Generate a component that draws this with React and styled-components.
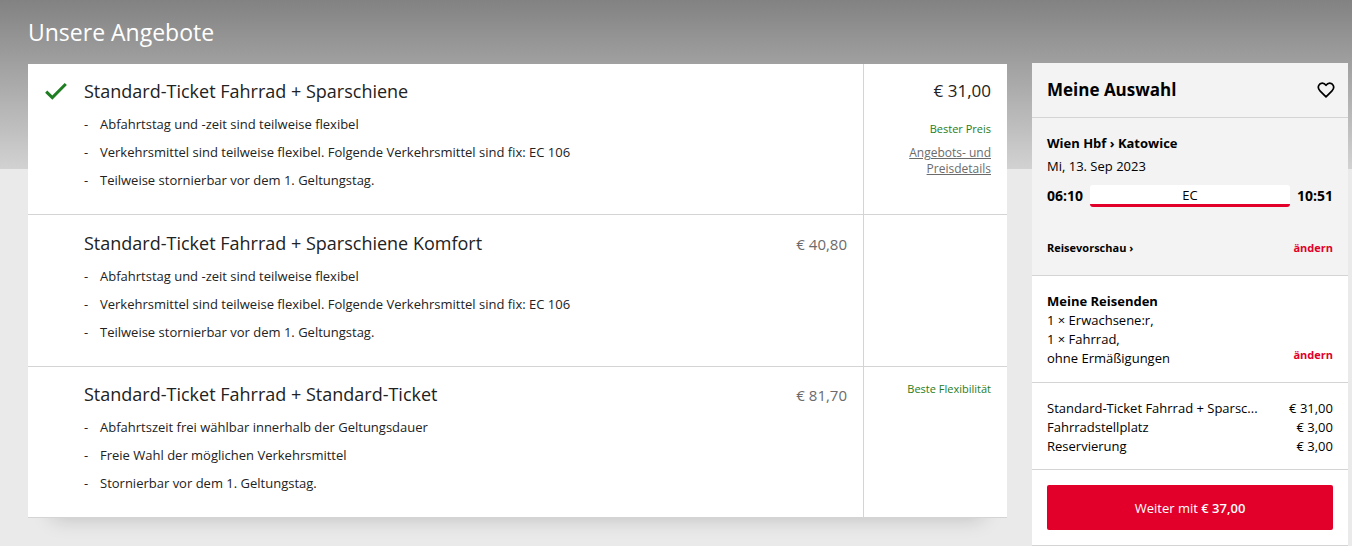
import React from 'react'
import styled, { createGlobalStyle } from 'styled-components'

const offers = [
  {
    title: 'Standard-Ticket Fahrrad + Sparschiene',
    price: '€ 31,00',
    badge: 'Bester Preis',
    points: [
      'Abfahrtstag und -zeit sind teilweise flexibel',
      'Verkehrsmittel sind teilweise flexibel. Folgende Verkehrsmittel sind fix: EC 106',
      'Teilweise stornierbar vor dem 1. Geltungstag.',
    ],
    selected: true,
  },
  {
    title: 'Standard-Ticket Fahrrad + Sparschiene Komfort',
    price: '€ 40,80',
    points: [
      'Abfahrtstag und -zeit sind teilweise flexibel',
      'Verkehrsmittel sind teilweise flexibel. Folgende Verkehrsmittel sind fix: EC 106',
      'Teilweise stornierbar vor dem 1. Geltungstag.',
    ],
  },
  {
    title: 'Standard-Ticket Fahrrad + Standard-Ticket',
    price: '€ 81,70',
    badge: 'Beste Flexibilität',
    points: [
      'Abfahrtszeit frei wählbar innerhalb der Geltungsdauer',
      'Freie Wahl der möglichen Verkehrsmittel',
      'Stornierbar vor dem 1. Geltungstag.',
    ],
  },
]

const positions = [
  { name: 'Standard-Ticket Fahrrad + Sparsc...', price: '€ 31,00' },
  { name: 'Fahrradstellplatz', price: '€ 3,00' },
  { name: 'Reservierung', price: '€ 3,00' },
]

const Offer = ({ offer }) => (
  <OfferRow>
    <OfferMain $plain={!offer.badge}>
      <CheckCell>
        {offer.selected && (
          <svg width="22" height="26" viewBox="0 0 22 26" role="img" aria-label="Ausgewählt">
            <path d="M1.2 13.6L7.3 19.6L20.8 6" fill="none" stroke="#1f7d22" strokeWidth="3" />
          </svg>
        )}
      </CheckCell>
      <OfferText>
        <OfferTitle>{offer.title}</OfferTitle>
        <Points>
          {offer.points.map((point) => <li key={point}>{point}</li>)}
        </Points>
      </OfferText>
      {!offer.selected && <Price>{offer.price}</Price>}
    </OfferMain>
    <OfferSide>
      {offer.selected && <Price $selected>{offer.price}</Price>}
      {offer.badge && <Badge $spaced={offer.selected}>{offer.badge}</Badge>}
      {offer.selected && <DetailsLink href="#details">Angebots- und Preisdetails</DetailsLink>}
    </OfferSide>
  </OfferRow>
)

const Summary = () => (
  <Sidebar>
    <SummaryHead>
      <h2>Meine Auswahl</h2>
      <HeartButton type="button" aria-label="Merken">
        <svg width="18" height="18" viewBox="0 0 18 18">
          <path
            d="M9 15.8L3 9.8C1.3 8.1 1 5.9 1.8 4.3C3.2 1.5 7 1.3 9 4.3C11 1.3 14.8 1.5 16.2 4.3C17 5.9 16.7 8.1 15 9.8Z"
            fill="none"
            stroke="#000"
            strokeWidth="1.7"
            strokeLinejoin="round"
          />
        </svg>
      </HeartButton>
    </SummaryHead>
    <Trip>
      <SectionTitle>Wien Hbf › Katowice</SectionTitle>
      <TripDate>Mi, 13. Sep 2023</TripDate>
      <Connection>
        <Time>06:10</Time>
        <Train>EC</Train>
        <Time>10:51</Time>
      </Connection>
      <Actions>
        <TextButton type="button">Reisevorschau ›</TextButton>
        <TextButton type="button" $red>ändern</TextButton>
      </Actions>
    </Trip>
    <Travellers>
      <div>
        <SectionTitle>Meine Reisenden</SectionTitle>
        <Lines>
          <li>1 × Erwachsene:r,</li>
          <li>1 × Fahrrad,</li>
          <li>ohne Ermäßigungen</li>
        </Lines>
      </div>
      <TextButton type="button" $red>ändern</TextButton>
    </Travellers>
    <Positions>
      {positions.map((item) => (
        <Position key={item.name}>
          <span>{item.name}</span>
          <span>{item.price}</span>
        </Position>
      ))}
    </Positions>
    <Checkout>
      <NextButton type="button">Weiter mit <b>€ 37,00</b></NextButton>
    </Checkout>
  </Sidebar>
)

const App = () => (
  <>
    <GlobalStyle />
    <Page>
      <Offers>
        <PageTitle>Unsere Angebote</PageTitle>
        <OfferList>
          {offers.map((offer) => <Offer key={offer.title} offer={offer} />)}
        </OfferList>
      </Offers>
      <Summary />
    </Page>
  </>
)

export default App

const GlobalStyle = createGlobalStyle`
* {
  box-sizing: border-box;
}
body {
  margin: 0;
  background: #eaeaea linear-gradient(#828282, #d2d2d2) no-repeat top / 100% 169px;
  color: #222;
  font-family: "Open Sans", "Noto Sans", sans-serif;
  font-size: 13px;
  line-height: 20px;
}
h1, h2, h3, p, ul {
  margin: 0;
  padding: 0;
}
ul {
  list-style: none;
}
button {
  padding: 0;
  border: none;
  background: none;
  font: inherit;
  cursor: pointer;
}
`

const Page = styled.div`
  display: flex;
  align-items: flex-start;
  gap: 25px;
  padding: 0 4px 0 28px;
`

const Offers = styled.main`
  flex: 1;
  min-width: 0;
`

const PageTitle = styled.h1`
  padding: 16px 0;
  color: white;
  font-size: 23px;
  font-weight: 400;
  line-height: 32px;
`

const OfferList = styled.div`
  box-shadow: 0 24px 20px -24px rgba(0, 0, 0, 0.2);
`

const OfferRow = styled.section`
  display: flex;
  background: white;
  border-bottom: 1px solid #d4d4d4;
`

const OfferMain = styled.div`
  flex: 1;
  display: flex;
  min-width: 0;
  padding: ${({ $plain }) => ($plain ? '15px' : '14px')} 16px 24px 0;
`

const CheckCell = styled.div`
  flex: none;
  width: 56px;
  padding-left: 17px;
`

const OfferText = styled.div`
  flex: 1;
  min-width: 0;
`

const OfferTitle = styled.h3`
  font-size: 18px;
  font-weight: 400;
  line-height: 26px;
`

const Points = styled.ul`
  display: flex;
  flex-direction: column;
  gap: 8px;
  padding-top: 10px;
  li {
    display: flex;
  }
  li::before {
    content: "-";
    width: 16px;
  }
`

const Price = styled.div`
  color: ${({ $selected }) => ($selected ? '#222' : '#6b6b6b')};
  font-size: ${({ $selected }) => ($selected ? '17px' : '15px')};
  line-height: ${({ $selected }) => ($selected ? '26px' : '28px')};
`

const OfferSide = styled.div`
  flex: none;
  display: flex;
  flex-direction: column;
  align-items: flex-end;
  width: 144px;
  padding: 14px 16px 0;
  border-left: 1px solid #d4d4d4;
  text-align: right;
  font-size: 12px;
  line-height: 16px;
`

const Badge = styled.div`
  margin-top: ${({ $spaced }) => ($spaced ? '17px' : '0')};
  color: #1f7d22;
  font-size: 11px;
`

const DetailsLink = styled.a`
  width: 88px;
  margin-top: 8px;
  color: #6b6b6b;
`

const Sidebar = styled.aside`
  flex: none;
  width: 316px;
  margin-top: 63px;
  background: white;
  color: black;
  border-bottom: 1px solid #d4d4d4;
`

const SummaryHead = styled.div`
  display: flex;
  align-items: center;
  justify-content: space-between;
  padding: 14px 13px 14px 15px;
  background: #f3f3f3;
  border-bottom: 1px solid #d4d4d4;
  h2 {
    font-size: 17px;
    line-height: 26px;
  }
`

const HeartButton = styled.button`
  display: flex;
`

const Trip = styled.section`
  padding: 15px 15px 17px;
  background: #f3f3f3;
  border-bottom: 1px solid #d4d4d4;
`

const SectionTitle = styled.h3`
  font-size: 13px;
  line-height: 20px;
`

const TripDate = styled.p`
  padding-top: 3px;
`

const Connection = styled.div`
  display: flex;
  align-items: center;
  gap: 7px;
  padding-top: 9px;
`

const Time = styled.b`
  font-size: 14px;
`

const Train = styled.div`
  flex: 1;
  height: 22px;
  background: white;
  border-bottom: 3px solid #e2002a;
  border-radius: 3px;
  text-align: center;
`

const Actions = styled.div`
  display: flex;
  justify-content: space-between;
  padding-top: 31px;
`

const TextButton = styled.button`
  color: ${({ $red }) => ($red ? '#e2002a' : 'black')};
  font-size: 11px;
  font-weight: 700;
  line-height: 20px;
`

const Travellers = styled.section`
  display: flex;
  align-items: flex-end;
  justify-content: space-between;
  padding: 15px 15px 14px;
  border-bottom: 1px solid #d4d4d4;
  > button {
    padding-bottom: 3px;
  }
`

const Lines = styled.ul`
  line-height: 19px;
`

const Positions = styled.section`
  padding: 16px 15px 13px;
  border-bottom: 1px solid #d4d4d4;
`

const Position = styled.div`
  display: flex;
  justify-content: space-between;
  gap: 16px;
  line-height: 19px;
  white-space: nowrap;
`

const Checkout = styled.div`
  padding: 15px;
`

const NextButton = styled.button`
  width: 100%;
  height: 45px;
  background: #e2002a;
  border-radius: 2px;
  color: white;
  b {
    font-weight: 600;
  }
  &:hover {
    background: #c4001f;
  }
`
